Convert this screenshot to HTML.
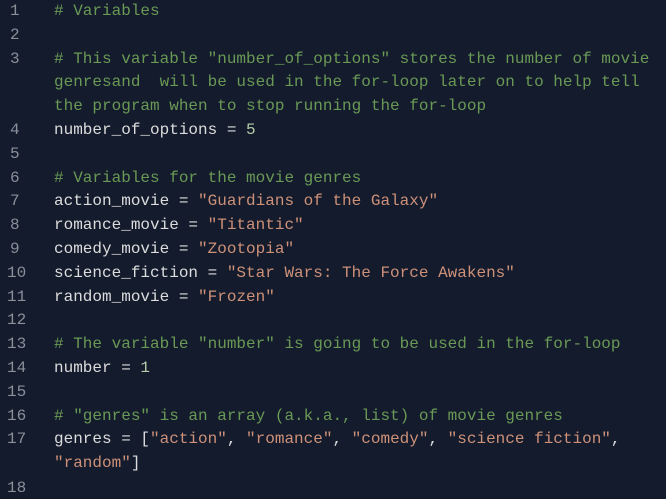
<!DOCTYPE html>
<html><head><style>
html,body{margin:0;padding:0;background:#131b2d;width:666px;height:499px;overflow:hidden}
.w{position:relative;top:2px;font-family:"Liberation Mono",monospace;font-size:16px;line-height:23.8px;color:#dcdcdc}
.r{position:absolute;left:0;white-space:pre}
.n{position:absolute;left:10px;color:#8a8f98}
.c{position:absolute;left:54px;white-space:pre}
.g{color:#6a9955}.s{color:#ce9178}.k{color:#b5cea8}
</style></head><body><div class="w">
<div class="r" style="top:-2px"><span class="n">1</span><span class="c g"># Variables</span></div>
<div class="r" style="top:21.8px"><span class="n">2</span></div>
<div class="r" style="top:45.6px"><span class="n">3</span><span class="c g"># This variable "number_of_options" stores the number of movie
genresand  will be used in the for-loop later on to help tell
the program when to stop running the for-loop</span></div>
<div class="r" style="top:117px"><span class="n">4</span><span class="c">number_of_options = <span class="k">5</span></span></div>
<div class="r" style="top:140.8px"><span class="n">5</span></div>
<div class="r" style="top:164.6px"><span class="n">6</span><span class="c g"># Variables for the movie genres</span></div>
<div class="r" style="top:188.4px"><span class="n">7</span><span class="c">action_movie = <span class="s">"Guardians of the Galaxy"</span></span></div>
<div class="r" style="top:212.2px"><span class="n">8</span><span class="c">romance_movie = <span class="s">"Titantic"</span></span></div>
<div class="r" style="top:236px"><span class="n">9</span><span class="c">comedy_movie = <span class="s">"Zootopia"</span></span></div>
<div class="r" style="top:259.8px"><span class="n" style="left:7px">10</span><span class="c">science_fiction = <span class="s">"Star Wars: The Force Awakens"</span></span></div>
<div class="r" style="top:283.6px"><span class="n" style="left:7px">11</span><span class="c">random_movie = <span class="s">"Frozen"</span></span></div>
<div class="r" style="top:307.4px"><span class="n" style="left:7px">12</span></div>
<div class="r" style="top:331.2px"><span class="n" style="left:7px">13</span><span class="c g"># The variable "number" is going to be used in the for-loop</span></div>
<div class="r" style="top:355px"><span class="n" style="left:7px">14</span><span class="c">number = <span class="k">1</span></span></div>
<div class="r" style="top:378.8px"><span class="n" style="left:7px">15</span></div>
<div class="r" style="top:402.6px"><span class="n" style="left:7px">16</span><span class="c g"># "genres" is an array (a.k.a., list) of movie genres</span></div>
<div class="r" style="top:426.4px"><span class="n" style="left:7px">17</span><span class="c">genres = [<span class="s">"action"</span>, <span class="s">"romance"</span>, <span class="s">"comedy"</span>, <span class="s">"science fiction"</span>,
<span class="s">"random"</span>]</span></div>
<div class="r" style="top:475px"><span class="n" style="left:7px">18</span></div>
</div></body></html>
